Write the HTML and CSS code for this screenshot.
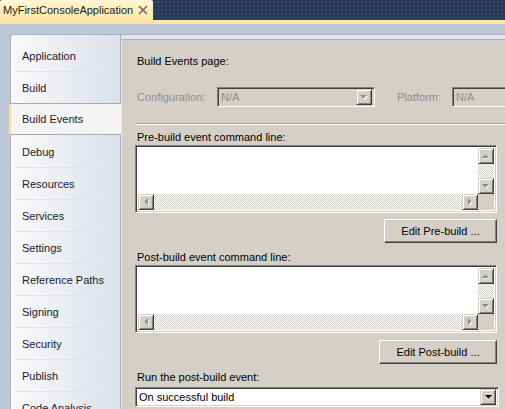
FILE: index.html
```html
<!DOCTYPE html>
<html>
<head>
<meta charset="utf-8">
<link rel="stylesheet" href="styles.css">
</head>
<body>
<div class="tabbar">
  <div class="doctab">
    <span class="doctab-title">MyFirstConsoleApplication</span>
    <svg class="doctab-close" width="10" height="10" viewBox="0 0 10 10"><path d="M1 1L9 9M9 1L1 9" stroke="#6b6b6b" stroke-width="1.6" fill="none"/></svg>
  </div>
</div>
<div class="tabstrip"></div>
<div class="frame">
  <nav class="nav">
    <div class="nav-item">Application</div>
    <div class="nav-item">Build</div>
    <div class="nav-item selected">Build Events</div>
    <div class="nav-item">Debug</div>
    <div class="nav-item">Resources</div>
    <div class="nav-item">Services</div>
    <div class="nav-item">Settings</div>
    <div class="nav-item">Reference Paths</div>
    <div class="nav-item">Signing</div>
    <div class="nav-item">Security</div>
    <div class="nav-item">Publish</div>
    <div class="nav-item">Code Analysis</div>
  </nav>
  <main class="content">
    <div class="page-title">Build Events page:</div>
    <div class="config-row">
      <span class="lbl-dis lbl-config">Configuration:</span>
      <div class="combo combo-disabled combo-config">
        <span class="combo-text">N/A</span>
        <span class="sbtn combo-btn"><svg width="8" height="5" viewBox="0 0 8 5"><path d="M1 1h7L4.5 4.5z" fill="#fff"/><path d="M0 0h7L3.5 3.5z" fill="#8c8c8c"/></svg></span>
      </div>
      <span class="lbl-dis lbl-platform">Platform:</span>
      <div class="combo combo-disabled combo-platform">
        <span class="combo-text">N/A</span>
      </div>
    </div>
    <div class="sep"></div>

    <div class="field-label">Pre-build event command line:</div>
    <div class="textbox">
      <div class="tb-area"></div>
      <div class="vscroll">
        <span class="sbtn"><svg width="8" height="5" viewBox="0 0 8 5"><path d="M1 5h7L4.5 1.5z" fill="#fff"/><path d="M0 4h7L3.5 0.5z" fill="#8c8c8c"/></svg></span>
        <span class="track"></span>
        <span class="sbtn"><svg width="8" height="5" viewBox="0 0 8 5"><path d="M1 1h7L4.5 4.5z" fill="#fff"/><path d="M0 0h7L3.5 3.5z" fill="#8c8c8c"/></svg></span>
      </div>
      <div class="hscroll">
        <span class="sbtn"><svg width="5" height="8" viewBox="0 0 5 8"><path d="M5 1v7L1.5 4.5z" fill="#fff"/><path d="M4 0v7L0.5 3.5z" fill="#8c8c8c"/></svg></span>
        <span class="track"></span>
        <span class="sbtn"><svg width="5" height="8" viewBox="0 0 5 8"><path d="M1 1v7L4.5 4.5z" fill="#fff"/><path d="M0 0v7L3.5 3.5z" fill="#8c8c8c"/></svg></span>
      </div>
      <div class="corner"></div>
    </div>
    <div class="btn-row"><span class="btn btn-pre">Edit Pre-build ...</span></div>

    <div class="field-label field-label-post">Post-build event command line:</div>
    <div class="textbox">
      <div class="tb-area"></div>
      <div class="vscroll">
        <span class="sbtn"><svg width="8" height="5" viewBox="0 0 8 5"><path d="M1 5h7L4.5 1.5z" fill="#fff"/><path d="M0 4h7L3.5 0.5z" fill="#8c8c8c"/></svg></span>
        <span class="track"></span>
        <span class="sbtn"><svg width="8" height="5" viewBox="0 0 8 5"><path d="M1 1h7L4.5 4.5z" fill="#fff"/><path d="M0 0h7L3.5 3.5z" fill="#8c8c8c"/></svg></span>
      </div>
      <div class="hscroll">
        <span class="sbtn"><svg width="5" height="8" viewBox="0 0 5 8"><path d="M5 1v7L1.5 4.5z" fill="#fff"/><path d="M4 0v7L0.5 3.5z" fill="#8c8c8c"/></svg></span>
        <span class="track"></span>
        <span class="sbtn"><svg width="5" height="8" viewBox="0 0 5 8"><path d="M1 1v7L4.5 4.5z" fill="#fff"/><path d="M0 0v7L3.5 3.5z" fill="#8c8c8c"/></svg></span>
      </div>
      <div class="corner"></div>
    </div>
    <div class="btn-row btn-row-post"><span class="btn btn-post">Edit Post-build ...</span></div>

    <div class="field-label field-label-run">Run the post-build event:</div>
    <div class="combo combo-select">
      <span class="combo-text">On successful build</span>
      <span class="sbtn combo-btn"><svg width="7" height="4" viewBox="0 0 7 4"><path d="M0 0h7L3.5 3.5z" fill="#000"/></svg></span>
    </div>
  </main>
</div>
</body>
</html>
```

FILE: styles.css
```css
html, body {
  margin: 0;
  padding: 0;
}
body {
  width: 505px;
  height: 409px;
  overflow: hidden;
  background: #bdc8d8;
  font-family: "Liberation Sans", Arial, sans-serif;
  font-size: 11px;
  color: #000;
}

/* document tab bar */
.tabbar {
  height: 20px;
  display: flex;
  background-color: #293a58;
  background-image: radial-gradient(#33466a 0.8px, transparent 1px);
  background-size: 4px 4px;
}
.doctab {
  width: 153px;
  height: 20px;
  box-sizing: border-box;
  display: flex;
  align-items: center;
  padding-left: 3px;
  padding-right: 5px;
  background: linear-gradient(#fff6d8, #ffeeb8 50%, #ffe8a6);
  border-radius: 2px 2px 0 0;
  color: #1b1b1b;
}
.doctab-title {
  font-size: 11px;
  line-height: 14px;
}
.doctab-close {
  margin-left: auto;
}
.tabstrip {
  height: 4px;
  background: #ffe8a6;
}

/* main frame */
.frame {
  margin-top: 10px;
  margin-left: 10px;
  height: 375px;
  display: flex;
  border-top: 1px solid #a6b1c2;
  border-left: 1px solid #a6b1c2;
  border-top-left-radius: 3px;
  background: #e4e8ee;
}
.nav {
  width: 110px;
  flex-shrink: 0;
  box-sizing: border-box;
  padding-top: 4px;
  border-right: 1px solid #a4aebe;
  border-top-left-radius: 3px;
  background: linear-gradient(to right, #f8f9fa, #dce1e9);
}
.nav-item {
  height: 32px;
  box-sizing: border-box;
  margin-left: 4px;
  margin-right: 2px;
  padding-left: 7px;
  display: flex;
  align-items: center;
  border-top: 1px solid #dfe2e8;
  color: #1a2030;
  white-space: nowrap;
}
.nav-item:first-child {
  border-top-color: transparent;
}
.nav-item.selected {
  margin-left: -2px;
  margin-right: -1px;
  padding-left: 11px;
  border-top: 1px solid #a3abb7;
  border-bottom: 1px solid #a3abb7;
  border-left: 2px solid #ffde8c;
  background: #f4f4f4;
}
.nav-item.selected + .nav-item {
  border-top-color: transparent;
}

/* content */
.content {
  flex: 1;
  min-width: 0;
  margin-top: 4px;
  border-top: 1px solid #a6b1c2;
  border-left: 1px solid #ecebe6;
  background: #d4d0c8;
  padding: 14px 8px 0 13px;
  display: flex;
  flex-direction: column;
  overflow: hidden;
}
.page-title {
  line-height: 14px;
  padding-left: 2px;
}
.config-row {
  margin-top: 19px;
  height: 20px;
  display: flex;
  align-items: center;
  white-space: nowrap;
}
.lbl-dis {
  color: #8d8d8d;
  line-height: 14px;
  flex-shrink: 0;
  box-sizing: border-box;
}
.lbl-config {
  width: 82px;
  padding-left: 2px;
}
.lbl-platform {
  width: 55px;
  margin-left: 22px;
}

/* sunken boxes */
.combo,
.textbox {
  box-sizing: border-box;
  border: 1px solid;
  border-color: #808080 #ffffff #ffffff #808080;
  box-shadow: inset 1px 1px #404040, inset -1px -1px #d4d0c8;
}
.combo {
  height: 20px;
  display: flex;
  align-items: center;
  padding: 2px;
  flex-shrink: 0;
}
.combo-text {
  padding-left: 1px;
  line-height: 14px;
}
.combo-disabled {
  background: #d4d0c8;
  color: #8d8d8d;
}
.combo-config {
  width: 158px;
}
.combo-platform {
  width: 80px;
}
.combo-btn {
  margin-left: auto;
}
.combo-select {
  margin-top: 3px;
  margin-right: -2px;
  background: #fff;
}

.sep {
  margin-top: 16px;
  margin-left: 1px;
  margin-right: -8px;
  border-top: 1px solid #a0a0a0;
  border-bottom: 1px solid #fff;
}

.field-label {
  margin-top: 5px;
  line-height: 14px;
  padding-left: 2px;
}
.field-label-post {
  margin-top: 7px;
}
.field-label-run {
  margin-top: 6px;
}

.textbox {
  margin-top: 1px;
  height: 68px;
  padding: 2px;
  display: grid;
  grid-template-columns: 1fr 16px;
  grid-template-rows: 1fr 16px;
  background: #fff;
}
.tb-area {
  background: #fff;
}
.vscroll {
  display: flex;
  flex-direction: column;
}
.hscroll {
  display: flex;
}
.track {
  flex: 1;
  background-color: #d4d0c8;
  background-image: conic-gradient(#fff 25%, transparent 0 50%, #fff 0 75%, transparent 0);
  background-size: 2px 2px;
}
.corner {
  background: #d4d0c8;
}

/* raised controls */
.sbtn {
  width: 16px;
  height: 16px;
  flex-shrink: 0;
  box-sizing: border-box;
  display: flex;
  align-items: center;
  justify-content: center;
  background: #d4d0c8;
  border: 1px solid;
  border-color: #d4d0c8 #404040 #404040 #d4d0c8;
  box-shadow: inset 1px 1px #fff, inset -1px -1px #808080;
}
.sbtn svg {
  display: block;
}

.btn-row {
  margin-top: 6px;
  display: flex;
  justify-content: flex-end;
}
.btn-row-post {
  margin-top: 7px;
}
.btn {
  height: 24px;
  box-sizing: border-box;
  display: flex;
  align-items: center;
  justify-content: center;
  background: #d4d0c8;
  border: 1px solid;
  border-color: #ffffff #404040 #404040 #ffffff;
  box-shadow: inset -1px -1px #808080;
  color: #000;
}
.btn-pre {
  width: 113px;
}
.btn-post {
  width: 118px;
}
```
